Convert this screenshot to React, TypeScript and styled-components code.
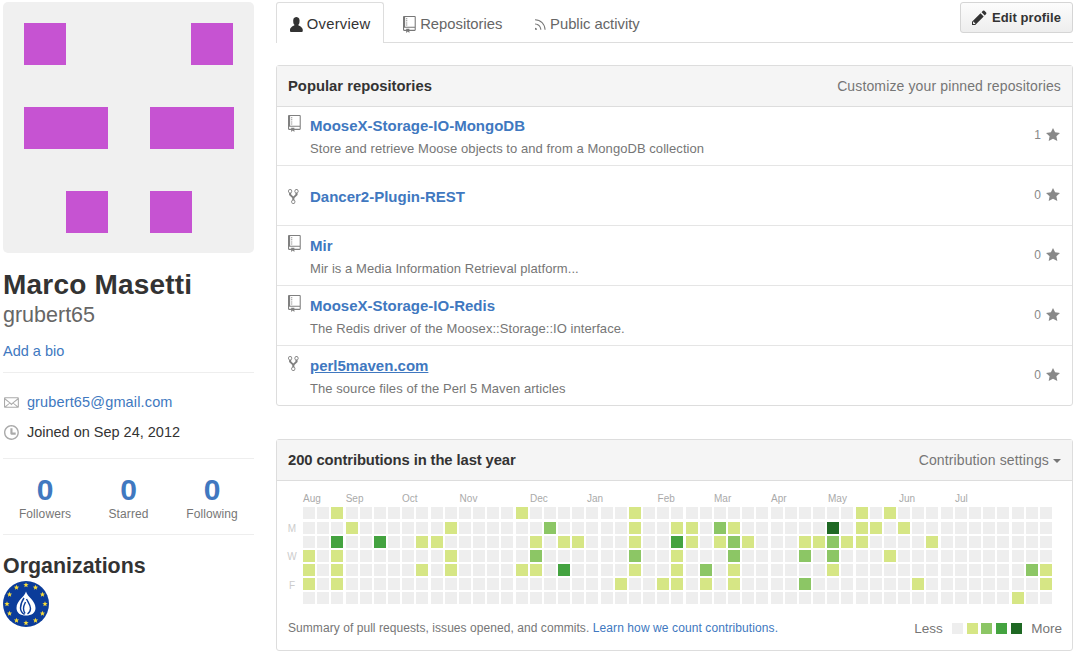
import React from 'react';
import styled, { createGlobalStyle } from 'styled-components';

const GlobalStyle = createGlobalStyle`
  html, body {
    margin: 0;
    padding: 0;
    background: #fff;
    color: #333;
    font-family: "Liberation Sans", Arial, sans-serif;
    font-size: 13px;
  }
  a {
    color: #4078c0;
    text-decoration: none;
  }
`;

const Page = styled.div`
  display: grid;
  grid-template-columns: 251px 797px;
  column-gap: 22px;
  padding: 2px 0 0 3px;
  width: 1079px;
  height: 653px;
  box-sizing: border-box;
  overflow: hidden;
`;

const Sidebar = styled.aside`
  display: flex;
  flex-direction: column;
`;

const Avatar = styled.svg`
  display: block;
  width: 251px;
  height: 251px;
  border-radius: 5px;
`;

const FullName = styled.h1`
  margin: 16px 0 0;
  font-size: 28px;
  line-height: 32px;
  letter-spacing: 0.2px;
  font-weight: 700;
  color: #333;
`;

const Username = styled.div`
  font-size: 21.5px;
  line-height: 28px;
  color: #666;
`;

const Bio = styled.a`
  display: block;
  margin-top: 14px;
  padding-bottom: 12px;
  font-size: 14.5px;
  line-height: 17px;
  border-bottom: 1px solid #eee;
`;

const Details = styled.ul`
  list-style: none;
  margin: 0;
  padding: 14px 0 11px;
  border-bottom: 1px solid #eee;
`;

const Detail = styled.li`
  display: flex;
  align-items: center;
  gap: 8px;
  height: 30px;
  padding-left: 1px;
  font-size: 14.5px;
  svg {
    fill: #aaa;
    flex: none;
  }
`;

const EmailLink = styled.a`
  letter-spacing: 0.15px;
`;

const Stats = styled.div`
  display: grid;
  grid-template-columns: 84px 83px 84px;
  padding: 17px 0 12px;
  border-bottom: 1px solid #eee;
`;

const Stat = styled.div`
  display: flex;
  flex-direction: column;
  align-items: center;
`;

const StatValue = styled.a`
  font-size: 30px;
  line-height: 28px;
  font-weight: 700;
`;

const StatLabel = styled.span`
  margin-top: 3px;
  font-size: 12px;
  line-height: 15px;
  letter-spacing: 0.1px;
  color: #767676;
`;

const SectionTitle = styled.h3`
  margin: 17px 0 0;
  font-size: 21.4px;
  line-height: 28px;
  font-weight: 700;
`;

const OrgLogo = styled.svg`
  display: block;
  width: 46px;
  height: 46px;
  margin-top: 1px;
`;

const Main = styled.main`
  display: flex;
  flex-direction: column;
`;

const TabBar = styled.nav`
  display: flex;
  align-items: flex-start;
  gap: 5px;
  height: 40px;
  border-bottom: 1px solid #ddd;
  position: relative;
`;

const Tab = styled.a<{ $active?: boolean }>`
  display: flex;
  align-items: center;
  gap: 4px;
  box-sizing: border-box;
  height: ${p => (p.$active ? 41 : 40)}px;
  padding: ${p => (p.$active ? 2 : 3)}px 13px 0;
  font-size: 14.8px;
  letter-spacing: ${p => (p.$active ? 0.25 : 0)}px;
  color: ${p => (p.$active ? '#333' : '#666')};
  background: ${p => (p.$active ? '#fff' : 'transparent')};
  border: 1px solid ${p => (p.$active ? '#ddd' : 'transparent')};
  border-bottom: 0;
  border-radius: 3px 3px 0 0;
  svg {
    fill: ${p => (p.$active ? '#333' : '#777')};
  }
`;

const EditButton = styled.a`
  position: absolute;
  right: 0;
  top: 0;
  display: flex;
  align-items: center;
  gap: 5px;
  box-sizing: border-box;
  width: 113px;
  height: 31px;
  padding-left: 11px;
  font-size: 13px;
  letter-spacing: 0.1px;
  font-weight: 700;
  color: #333;
  background: linear-gradient(#fcfcfc, #eee);
  border: 1px solid #d5d5d5;
  border-radius: 3px;
  svg {
    fill: #333;
  }
`;

const Panel = styled.section<{ $top: number }>`
  margin-top: ${p => p.$top}px;
  border: 1px solid #ddd;
  border-radius: 3px;
`;

const PanelHeader = styled.header`
  display: flex;
  align-items: center;
  justify-content: space-between;
  height: 40px;
  padding: 0 11px;
  background: #f5f5f5;
  border-bottom: 1px solid #ddd;
`;

const PanelTitle = styled.h3<{ $spacing?: number }>`
  margin: 0;
  font-size: 14.8px;
  letter-spacing: ${p => p.$spacing ?? 0}px;
  font-weight: 700;
  color: #333;
`;

const HeaderNote = styled.a`
  display: flex;
  align-items: center;
  gap: 4px;
  font-size: 14px;
  letter-spacing: 0.13px;
  color: #767676;
`;

const Caret = styled.span`
  width: 0;
  height: 0;
  margin-top: 2px;
  border-top: 4px solid #767676;
  border-left: 4px solid transparent;
  border-right: 4px solid transparent;
`;

const RepoRow = styled.div`
  display: grid;
  grid-template-columns: 22px 1fr auto;
  height: 60px;
  box-sizing: border-box;
  padding: 9px 11px 0 11px;
  border-top: 1px solid #e5e5e5;
  &:first-child {
    height: 58px;
    padding-top: 8px;
    border-top: 0;
  }
`;

const RepoIcon = styled.svg<{ $centered?: boolean }>`
  fill: #808080;
  margin-top: ${p => (p.$centered ? 13 : 0)}px;
`;

const RepoBody = styled.div<{ $centered?: boolean }>`
  display: flex;
  flex-direction: column;
  padding-top: ${p => (p.$centered ? 13 : 2)}px;
`;

const RepoName = styled.a<{ $hover?: boolean }>`
  font-size: 15px;
  line-height: 18px;
  font-weight: 700;
  text-decoration: ${p => (p.$hover ? 'underline' : 'none')};
`;

const RepoDescription = styled.p`
  margin: 6px 0 0;
  font-size: 13px;
  line-height: 15px;
  letter-spacing: 0.06px;
  color: #767676;
`;

const RepoStars = styled.div`
  display: flex;
  align-items: center;
  gap: 5px;
  height: 28px;
  padding-top: 6px;
  margin-right: 1px;
  font-size: 12px;
  color: #888;
  svg {
    fill: #888;
  }
`;

const CalendarBody = styled.div`
  padding: 8px 0 13px;
`;

const Calendar = styled.svg`
  display: block;
`;

const MonthLabel = styled.text`
  font-size: 10px;
  fill: #aaa;
`;

const DayLabel = styled.text`
  font-size: 10px;
  fill: #ccc;
  text-anchor: middle;
`;

const CalendarFooter = styled.footer`
  display: flex;
  align-items: center;
  justify-content: space-between;
  height: 18px;
  margin-top: 12px;
  padding: 0 10px 0 11px;
  font-size: 12px;
  letter-spacing: 0.06px;
  color: #767676;
`;

const LearnLink = styled.a`
  letter-spacing: 0.1px;
`;

const Legend = styled.div`
  display: flex;
  align-items: center;
  gap: 3.6px;
  font-size: 13.5px;
  letter-spacing: 0;
`;

const LegendWord = styled.span<{ $side: 'left' | 'right' }>`
  margin-${p => p.$side}: 6px;
`;

const levelColors = ['#eeeeee', '#d6e685', '#8cc665', '#44a340', '#1e6823'];

const Swatch = styled.span<{ $level: number }>`
  width: 11px;
  height: 11px;
  background: ${p => levelColors[p.$level]};
`;

const months: [string, number][] = [
  ['Aug', 26],
  ['Sep', 68.7],
  ['Oct', 125],
  ['Nov', 182.6],
  ['Dec', 253],
  ['Jan', 310],
  ['Feb', 380.6],
  ['Mar', 437],
  ['Apr', 494],
  ['May', 551],
  ['Jun', 622],
  ['Jul', 678],
];

// column -> level for each weekday row
const contributions: Record<number, number>[] = [
  { 2: 1, 15: 1, 23: 1, 39: 1, 41: 1 },
  { 3: 1, 10: 1, 17: 2, 23: 1, 26: 1, 27: 1, 29: 2, 30: 1, 37: 4, 39: 1, 40: 1, 42: 1 },
  { 2: 3, 5: 3, 8: 1, 9: 1, 16: 1, 18: 1, 19: 1, 23: 1, 26: 3, 27: 1, 29: 1, 30: 2, 31: 1, 35: 1, 36: 1, 37: 2, 38: 1, 39: 1, 44: 1 },
  { 0: 1, 2: 1, 10: 1, 16: 2, 23: 2, 26: 1, 30: 2, 35: 2, 37: 2, 41: 1 },
  { 0: 1, 2: 1, 8: 1, 10: 1, 15: 1, 16: 1, 18: 3, 23: 1, 26: 1, 28: 2, 30: 1, 37: 1, 51: 2, 52: 1 },
  { 0: 1, 2: 1, 22: 1, 25: 1, 26: 1, 28: 1, 30: 1, 35: 2, 43: 1, 52: 1 },
  { 50: 1 },
];

const repos = [
  { name: 'MooseX-Storage-IO-MongoDB', description: 'Store and retrieve Moose objects to and from a MongoDB collection', stars: 1, icon: 'repo' },
  { name: 'Dancer2-Plugin-REST', stars: 0, icon: 'fork' },
  { name: 'Mir', description: 'Mir is a Media Information Retrieval platform...', stars: 0, icon: 'repo' },
  { name: 'MooseX-Storage-IO-Redis', description: 'The Redis driver of the Moosex::Storage::IO interface.', stars: 0, icon: 'repo' },
  { name: 'perl5maven.com', description: 'The source files of the Perl 5 Maven articles', stars: 0, icon: 'fork', hover: true },
];

const paths = {
  person: 'M12 14.002a.998.998 0 0 1-.998.998H1.001A1 1 0 0 1 0 13.999V13c0-2.633 4-4 4-4s.229-.409 0-1c-.841-.62-.944-1.59-1-4 .173-2.413 1.867-3 3-3s2.827.586 3 3c-.056 2.41-.159 3.38-1 4-.229.59 0 1 0 1s4 1.367 4 4v1.002z',
  repo: 'M4 9H3V8h1v1zm0-3H3v1h1V6zm0-2H3v1h1V4zm0-2H3v1h1V2zm8-1v12c0 .55-.45 1-1 1H6v2l-1.5-1.5L3 16v-2H1c-.55 0-1-.45-1-1V1c0-.55.45-1 1-1h10c.55 0 1 .45 1 1zm-1 10H1v2h2v-1h3v1h5v-2zm0-10H2v9h9V1z',
  rss: 'M2 13H0v-2c1.11 0 2 .89 2 2zM0 3v1a9 9 0 0 1 9 9h1C10 7.48 5.52 3 0 3zm0 4v1c2.75 0 5 2.25 5 5h1c0-3.31-2.69-6-6-6z',
  pencil: 'M0 12v3h3l8-8-3-3-8 8zm3 2H1v-2h1v1h1v1zm10.3-9.3L12 6 9 3l1.3-1.3a.996.996 0 0 1 1.41 0l1.59 1.59c.39.39.39 1.02 0 1.41z',
  star: 'M14 6l-4.9-.64L7 1 4.9 5.36 0 6l3.6 3.26L2.67 14 7 11.67 11.33 14l-.93-4.74L14 6z',
  fork: 'M8 1a1.993 1.993 0 0 0-1 3.72V6L5 8 3 6V4.72A1.993 1.993 0 0 0 2 1a1.993 1.993 0 0 0-1 3.72V6.5l3 3v1.78A1.993 1.993 0 0 0 5 15a1.993 1.993 0 0 0 1-3.72V9.5l3-3V4.72A1.993 1.993 0 0 0 8 1zM2 4.2C1.34 4.2.8 3.65.8 3c0-.65.55-1.2 1.2-1.2.65 0 1.2.55 1.2 1.2 0 .65-.55 1.2-1.2 1.2zm3 10c-.66 0-1.2-.55-1.2-1.2 0-.65.55-1.2 1.2-1.2.65 0 1.2.55 1.2 1.2 0 .65-.55 1.2-1.2 1.2zm3-10c-.66 0-1.2-.55-1.2-1.2 0-.65.55-1.2 1.2-1.2.65 0 1.2.55 1.2 1.2 0 .65-.55 1.2-1.2 1.2z',
  mail: 'M0 4v8c0 .55.45 1 1 1h12c.55 0 1-.45 1-1V4c0-.55-.45-1-1-1H1c-.55 0-1 .45-1 1zm13 0L7 9 1 4h12zM1 5.5l4 3-4 3v-6zM2 12l3.5-3L7 10.5 8.5 9l3.5 3H2zm11-.5l-4-3 4-3v6z',
  clock: 'M8 8h3v2H7c-.55 0-1-.45-1-1V4h2v4zM7 2.3c3.14 0 5.7 2.56 5.7 5.7s-2.56 5.7-5.7 5.7A5.71 5.71 0 0 1 1.3 8c0-3.14 2.56-5.7 5.7-5.7zM7 1C3.14 1 0 4.14 0 8s3.14 7 7 7 7-3.14 7-7-3.14-7-7-7z',
};

type IconName = keyof typeof paths;

const viewWidths: Record<IconName, number> = {
  person: 12, repo: 12, rss: 10, pencil: 14, star: 14, fork: 10, mail: 14, clock: 14,
};

const Octicon = ({ name, size = 17 }: { name: IconName; size?: number }) => (
  <svg width={(viewWidths[name] * size) / 16} height={size} viewBox={`0 0 ${viewWidths[name]} 16`}>
    <path fillRule="evenodd" d={paths[name]} />
  </svg>
);

const Star = ({ cx, cy }: { cx: number; cy: number }) => {
  const points = Array.from({ length: 10 }, (_, i) => {
    const r = i % 2 ? 1.2 : 2.8;
    const a = (Math.PI * i) / 5 - Math.PI / 2;
    return `${cx + r * Math.cos(a)},${cy + r * Math.sin(a)}`;
  }).join(' ');
  return <polygon points={points} fill="#f7dc3c" />;
};

const PerlLogo = () => (
  <OrgLogo viewBox="0 0 46 46">
    <circle cx="23" cy="23" r="23" fill="#0b3c9a" />
    {Array.from({ length: 12 }, (_, i) => {
      const a = (Math.PI * i) / 6;
      return <Star key={i} cx={23 + 19 * Math.cos(a)} cy={23 + 19 * Math.sin(a)} />;
    })}
    <path d="M23 10.500c1 5 9.500 9 9.500 16.500 0 5-4 7.500-9.500 7.500s-9.500-2.500-9.500-7.500c0-7.500 8.500-11.500 9.500-16.500z" fill="#fff" />
    <g fill="none" stroke="#0b3c9a" strokeWidth="1.4">
      <path d="M21 17c-2 3-3.500 6.500-3.500 10 0 3 1.500 5 4 6.500" />
      <path d="M23.500 18c1.500 3 4 6 4 9.500 0 3-1.500 4.500-3 5.500" />
      <path d="M22.500 21c-1 2-2 4-2 6.500 0 2 .5 3.500 1.500 5" />
    </g>
  </OrgLogo>
);

const ContributionChart = () => (
  <Calendar width="795" height="118" viewBox="0 0 795 118" shapeRendering="crispEdges">
    {months.map(([label, x]) => (
      <MonthLabel key={label} x={x} y="12.5">
        {label}
      </MonthLabel>
    ))}
    {([['M', 1], ['W', 3], ['F', 5]] as [string, number][]).map(([label, row]) => (
      <DayLabel key={label} x="15" y={row * 14.16 + 29}>
        {label}
      </DayLabel>
    ))}
    {contributions.map((row, r) =>
      Array.from({ length: 53 }, (_, c) => (
        <rect
          key={`${r}-${c}`}
          x={Math.round(26 + c * 14.17)}
          y={Math.round(18.4 + r * 14.16)}
          width="12"
          height="12"
          fill={levelColors[row[c] ?? 0]}
        />
      ))
    )}
  </Calendar>
);

const App = () => {
  return (
    <>
      <GlobalStyle />
      <Page>
        <Sidebar>
          <Avatar viewBox="0 0 251 251">
            <rect width="251" height="251" fill="#f0f0f0" />
            <g fill="#c653d2">
              <rect x="21" y="21" width="42" height="42" />
              <rect x="188" y="21" width="42" height="42" />
              <rect x="21" y="105" width="84" height="42" />
              <rect x="147" y="105" width="84" height="42" />
              <rect x="63" y="189" width="42" height="42" />
              <rect x="147" y="189" width="42" height="42" />
            </g>
          </Avatar>
          <FullName>Marco Masetti</FullName>
          <Username>grubert65</Username>
          <Bio>Add a bio</Bio>
          <Details>
            <Detail>
              <Octicon name="mail" />
              <EmailLink>grubert65@gmail.com</EmailLink>
            </Detail>
            <Detail>
              <Octicon name="clock" />
              <span>Joined on Sep 24, 2012</span>
            </Detail>
          </Details>
          <Stats>
            <Stat>
              <StatValue>0</StatValue>
              <StatLabel>Followers</StatLabel>
            </Stat>
            <Stat>
              <StatValue>0</StatValue>
              <StatLabel>Starred</StatLabel>
            </Stat>
            <Stat>
              <StatValue>0</StatValue>
              <StatLabel>Following</StatLabel>
            </Stat>
          </Stats>
          <SectionTitle>Organizations</SectionTitle>
          <PerlLogo />
        </Sidebar>
        <Main>
          <TabBar>
            <Tab $active>
              <Octicon name="person" />
              Overview
            </Tab>
            <Tab>
              <Octicon name="repo" />
              Repositories
            </Tab>
            <Tab>
              <Octicon name="rss" />
              Public activity
            </Tab>
            <EditButton>
              <Octicon name="pencil" />
              Edit profile
            </EditButton>
          </TabBar>
          <Panel $top={22}>
            <PanelHeader>
              <PanelTitle>Popular repositories</PanelTitle>
              <HeaderNote>Customize your pinned repositories</HeaderNote>
            </PanelHeader>
            <div>
              {repos.map(repo => {
                const icon = repo.icon as IconName;
                return (
                  <RepoRow key={repo.name}>
                    <RepoIcon
                      $centered={!repo.description}
                      width={(viewWidths[icon] * 17) / 16}
                      height="17"
                      viewBox={`0 0 ${viewWidths[icon]} 16`}
                    >
                      <path fillRule="evenodd" d={paths[icon]} />
                    </RepoIcon>
                    <RepoBody $centered={!repo.description}>
                      <RepoName $hover={repo.hover}>{repo.name}</RepoName>
                      {repo.description && <RepoDescription>{repo.description}</RepoDescription>}
                    </RepoBody>
                    <RepoStars>
                      {repo.stars}
                      <Octicon name="star" size={16} />
                    </RepoStars>
                  </RepoRow>
                );
              })}
            </div>
          </Panel>
          <Panel $top={33}>
            <PanelHeader>
              <PanelTitle $spacing={-0.1}>200 contributions in the last year</PanelTitle>
              <HeaderNote>
                Contribution settings
                <Caret />
              </HeaderNote>
            </PanelHeader>
            <CalendarBody>
              <ContributionChart />
              <CalendarFooter>
                <span>
                  Summary of pull requests, issues opened, and commits. <LearnLink>Learn how we count contributions.</LearnLink>
                </span>
                <Legend>
                  <LegendWord $side="right">Less</LegendWord>
                  {[0, 1, 2, 3, 4].map(level => (
                    <Swatch key={level} $level={level} />
                  ))}
                  <LegendWord $side="left">More</LegendWord>
                </Legend>
              </CalendarFooter>
            </CalendarBody>
          </Panel>
        </Main>
      </Page>
    </>
  );
};

export default App;
